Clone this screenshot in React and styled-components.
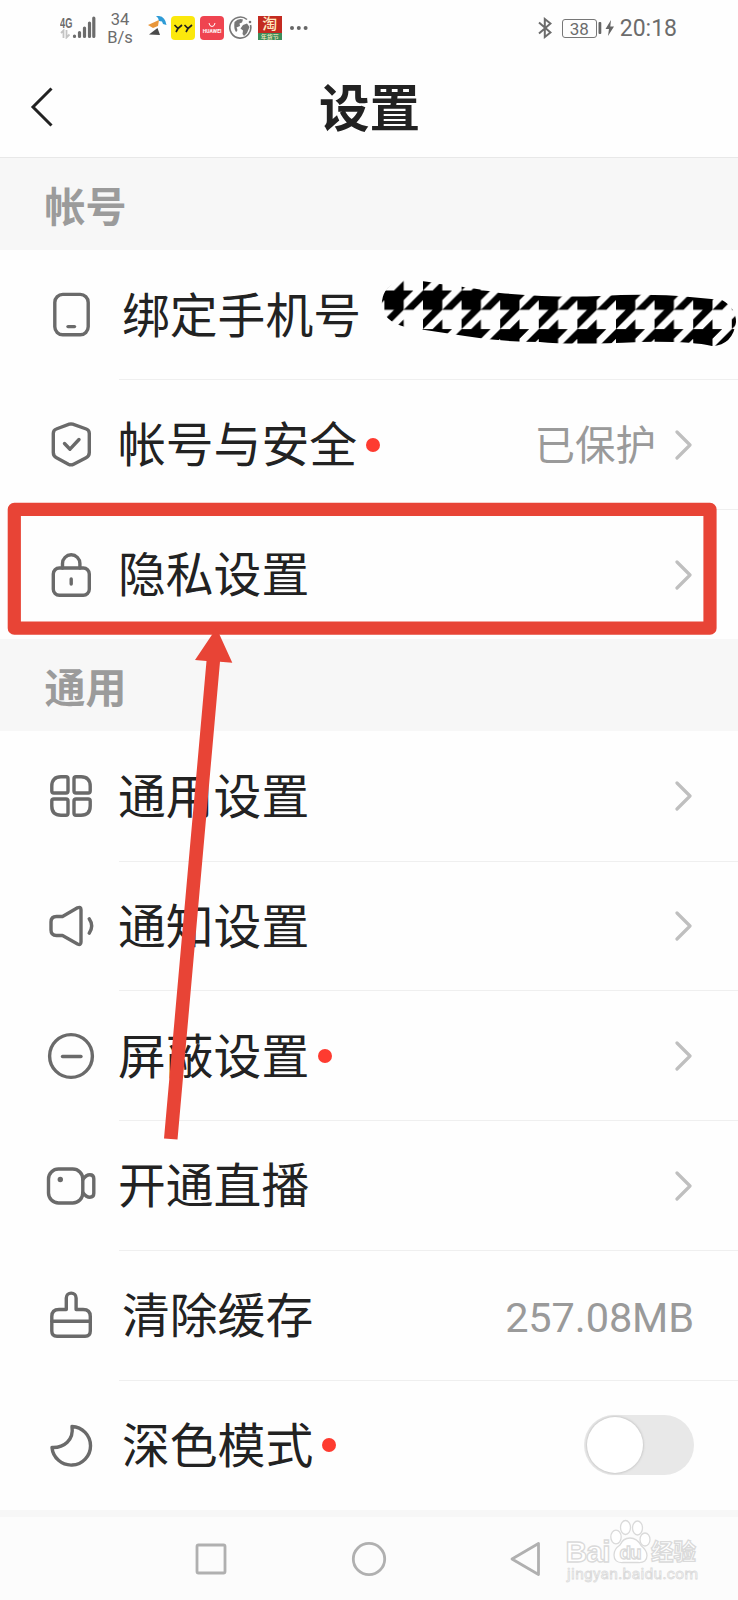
import React, { useState } from 'react';
import styled, { createGlobalStyle, css } from 'styled-components';

const GlobalStyle = createGlobalStyle`
  * {
    box-sizing: border-box;
  }

  body {
    margin: 0;
    background: #fefefe;
    color: #222;
    font-family: Roboto, 'Noto Sans CJK SC', sans-serif;
  }
`;

const Screen = styled.div`
  position: relative;
  display: flex;
  flex-direction: column;
  width: 738px;
  height: 1600px;
  overflow: hidden;
  background: #fefefe;
`;

const StatusBar = styled.div`
  display: flex;
  align-items: center;
  height: 56px;
  padding: 0 61px 0 60px;
  color: #6c6c6c;
`;

const Network = styled.div`
  display: flex;
  flex-direction: column;
  width: 12px;
  font-family: 'Liberation Sans', sans-serif;
  font-size: 14px;
  font-weight: 700;
  line-height: 11px;
`;

const NetworkLabel = styled.span`
  transform: scaleX(0.66);
  transform-origin: left;
`;

const Speed = styled.div`
  width: 28px;
  margin-left: 10px;
  padding-top: 1px;
  font-size: 16.5px;
  line-height: 18px;
  text-align: center;
`;

const AppIcons = styled.div`
  display: flex;
  align-items: center;
  gap: 4.8px;
  margin-left: 12.5px;
`;

const AppTile = styled.div`
  display: flex;
  align-items: center;
  justify-content: center;
  width: 24px;
  height: 24px;
  border-radius: 4px;
`;

const HuaweiTile = styled(AppTile)`
  flex-direction: column;
  background: #ef4450;
  color: #fff;
  font-size: 5px;
  font-weight: 700;
  line-height: 6px;
`;

const TaobaoTile = styled(AppTile)`
  flex-direction: column;
  justify-content: flex-start;
  border-radius: 0;
  background: #c32a20;
  color: #ffe9c0;
  font-size: 15px;
  font-weight: 500;
  line-height: 17px;
`;

const TaobaoBanner = styled.div`
  width: 24px;
  height: 7px;
  background: #3c8d5a;
  font-size: 6px;
  line-height: 7px;
  text-align: center;
`;

const StatusRight = styled.div`
  display: flex;
  align-items: center;
  margin-left: auto;
`;

const Battery = styled.div`
  width: 35px;
  height: 19px;
  margin-left: 10px;
  border: 1px solid #777;
  border-radius: 3px;
  font-size: 17px;
  line-height: 18px;
  text-align: center;
`;

const Time = styled.div`
  margin-left: 5px;
  padding-top: 1px;
  font-size: 23px;
  line-height: 28px;
`;

const Header = styled.header`
  display: grid;
  grid-template-columns: 100px 1fr 100px;
  align-items: center;
  height: 102px;
  border-bottom: 1px solid #e8e8e8;
`;

const BackButton = styled.button`
  display: flex;
  padding: 0 0 0 27px;
  border: none;
  background: none;
`;

const Title = styled.h1`
  margin: 0;
  padding: 6px 0 0 1px;
  font-size: 50.6px;
  font-weight: 700;
  line-height: 60px;
  text-align: center;
`;

const SectionTitle = styled.h2`
  display: flex;
  align-items: center;
  height: 92px;
  margin: 0;
  padding: 0 0 1px 44.5px;
  background: #f7f7f7;
  color: #9b9b9b;
  font-size: 41px;
  font-weight: 700;
`;

const Row = styled.div`
  position: relative;
  display: flex;
  align-items: center;
  height: 129.8px;
  padding: 0.4px 44px 0 44px;

  ${(props) =>
    props.$divider &&
    css`
      &::after {
        content: '';
        position: absolute;
        left: 119px;
        right: 0;
        bottom: -0.4px;
        height: 1px;
        background: #efefef;
      }
    `}
`;

const Label = styled.span`
  margin-left: ${(props) => (props.$indent ? 24 : 20)}px;
  padding-top: 3px;
  font-size: 47.8px;
  line-height: 60px;
  white-space: nowrap;
`;

const Dot = styled.span`
  width: 14px;
  height: 14px;
  margin-left: 9px;
  border-radius: 50%;
  background: #fe3b30;
`;

const Trailing = styled.div`
  display: flex;
  align-items: center;
  gap: 19px;
  margin-left: auto;
  color: #9a9a9a;
`;

const Value = styled.span`
  padding-bottom: 5px;
  font-size: 40.5px;
`;

const Size = styled.span`
  padding-top: 3px;
  font-size: 41.5px;
  letter-spacing: -0.1px;
`;

const Arrow = styled.svg`
  margin-right: 2px;
`;

const Toggle = styled.button`
  display: flex;
  justify-content: ${(props) => (props.$on ? 'flex-end' : 'flex-start')};
  align-items: center;
  width: 110px;
  height: 60px;
  padding: 0 3px;
  border: none;
  border-radius: 30px;
  background: #e8e8e8;
`;

const Knob = styled.span`
  width: 56px;
  height: 56px;
  border-radius: 50%;
  background: #fff;
  box-shadow: 0 0 2px 1px #ccc;
`;

const Scribble = styled.svg`
  position: absolute;
  left: 370px;
  top: 20px;
`;

const NavBar = styled.nav`
  position: relative;
  display: flex;
  align-items: center;
  gap: 122px;
  flex: 1;
  padding: 0 0 0 193px;
  border-top: 7px solid #f7f7f7;
  background: #fcfcfc;
`;

const Watermark = styled.svg`
  position: absolute;
  left: 558px;
  top: 0;
`;

const Annotation = styled.svg`
  position: absolute;
  left: 0;
  top: 0;
  pointer-events: none;
`;

const RowIcon = ({ children }) => (
  <svg
    width='54'
    height='54'
    viewBox='0 0 54 54'
    fill='none'
    stroke='#6a6a6a'
    strokeWidth='3.4'
    strokeLinecap='round'
    strokeLinejoin='round'
  >
    {children}
  </svg>
);

const icons = {
  phone: (
    <>
      <rect x='10.8' y='6.4' width='33.4' height='40.4' rx='8' />
      <path d='M24 38.6h6.5' />
    </>
  ),
  shield: (
    <>
      <path d='M25.3 6.2q1.7-.5 3.4 0L42.3 11q3 1 3 4.4V34.5q0 3.5-3.2 5.2L29.6 46.2q-2.6 1.3-5.2 0L12.5 39.7q-3.2-1.7-3.2-5.2V15.4q0-3.4 3-4.4Z' />
      <path d='M20.5 25.5l5.5 5.7 9-9.7' />
    </>
  ),
  lock: (
    <>
      <rect x='9.3' y='20' width='36' height='27.2' rx='6' />
      <path d='M18.5 20v-4.5a8.7 8.7 0 0 1 17.4 0V20M27.2 31v5' />
    </>
  ),
  grid: (
    <>
      <path d='M17 7.8h5q2 0 2 2V22q0 2-2 2H9.8q-2 0-2-2V17q0-9.2 9.2-9.2Z' />
      <path d='M37 7.8h-5q-2 0-2 2V22q0 2 2 2h12.200q2 0 2-2V17q0-9.200-9.200-9.200Z' />
      <path d='M17 46.2h5q2 0 2-2V32q0-2-2-2H9.8q-2 0-2 2v5q0 9.2 9.2 9.2Z' />
      <path d='M37 46.2h-5q-2 0-2-2V32q0-2 2-2h12.200q2 0 2 2v5q0 9.200-9.200 9.200Z' />
    </>
  ),
  speaker: (
    <>
      <path d='M18.5 17.5L33.5 8.8q3.500-1.500 3.500 2V43q0 3.500-3.500 2L18.500 36.500H12.500q-5.500 0-5.500-5.500V23q0-5.500 5.500-5.500Z' />
      <path d='M45.2 19.8q5 7.200 0 14.400' />
    </>
  ),
  block: (
    <>
      <circle cx='27' cy='27' r='21.4' />
      <path d='M18.5 27.5h18.5' />
    </>
  ),
  camera: (
    <>
      <rect x='4.5' y='10' width='34.3' height='34' rx='10' />
      <path d='M38.8 20.5q3.500-4.800 7-4.800 4 0 4 4v14.600q0 4-4 4-3.500 0-7-4.800' />
      <circle cx='16.3' cy='20.5' r='2.7' fill='#6a6a6a' stroke='none' />
    </>
  ),
  brush: (
    <>
      <path d='M22.3 20.5V9a4.9 4.9 0 0 1 9.8 0v11.5h7q7.200 0 7.200 7V42q0 5.200-5.200 5.200H13q-5.200 0-5.200-5.200V27.500q0-7 7.200-7Z' />
      <path d='M8 32.3h38' />
    </>
  ),
  moon: <path d='M28 8.5A19.3 19.3 0 1 1 8 29.5C20 30 30 22 28 8.5Z' />,
};

const Chevron = () => (
  <Arrow width='17' height='30' viewBox='0 0 17 30' fill='none'>
    <path
      d='M2 2l13 13L2 28'
      stroke='#bfbfbf'
      strokeWidth='3.2'
      strokeLinecap='round'
      strokeLinejoin='round'
    />
  </Arrow>
);

// Houndstooth brush stroke that hides the phone number
const PhoneScribble = () => (
  <Scribble width='368' height='90' viewBox='370 270 368 90'>
    <defs>
      <pattern
        id='tooth'
        x='538.8'
        y='290.5'
        width='38.6'
        height='38.6'
        patternUnits='userSpaceOnUse'
        viewBox='0 0 4 4'
      >
        <path d='M0 0h2v2h-2ZM2 0h1l-1 1ZM2 2h1l1-1v-1ZM0 3l1-1h1l-2 2ZM1 4l1-1v1Z' />
      </pattern>
    </defs>
    <path
      fill='url(#tooth)'
      d='M382 301Q384 285 402 280Q422 280 440 284Q468 287 500 293Q555 298 600 296Q650 293 690 297L722 300Q736 308 736 322Q733 345 712 346Q690 341 640 342Q570 345 540 342Q500 342 465 336L405 327Q380 320 382 301Z'
    />
  </Scribble>
);

const accountRows = [
  { icon: 'phone', label: '绑定手机号', indent: true, scribble: true },
  { icon: 'shield', label: '帐号与安全', dot: true, value: '已保护', arrow: true },
  { icon: 'lock', label: '隐私设置', arrow: true },
];

const generalRows = [
  { icon: 'grid', label: '通用设置', arrow: true },
  { icon: 'speaker', label: '通知设置', arrow: true },
  { icon: 'block', label: '屏蔽设置', dot: true, arrow: true },
  { icon: 'camera', label: '开通直播', arrow: true },
  { icon: 'brush', label: '清除缓存', indent: true, size: '257.08MB' },
  { icon: 'moon', label: '深色模式', indent: true, dot: true, toggle: true },
];

const SettingRow = ({ item, divider }) => {
  const [on, setOn] = useState(false);

  return (
    <Row $divider={divider}>
      <RowIcon>{icons[item.icon]}</RowIcon>
      <Label $indent={item.indent}>{item.label}</Label>
      {item.dot && <Dot />}
      {item.scribble && <PhoneScribble />}
      <Trailing>
        {item.value && <Value>{item.value}</Value>}
        {item.size && <Size>{item.size}</Size>}
        {item.arrow && <Chevron />}
        {item.toggle && (
          <Toggle $on={on} onClick={() => setOn(!on)}>
            <Knob />
          </Toggle>
        )}
      </Trailing>
    </Row>
  );
};

const Section = ({ title, rows }) => (
  <>
    <SectionTitle>{title}</SectionTitle>
    {rows.map((item, i) => (
      <SettingRow key={item.label} item={item} divider={i < rows.length - 1} />
    ))}
  </>
);

const Status = () => (
  <StatusBar>
    <Network>
      <NetworkLabel>4G</NetworkLabel>
      <svg width='12' height='10' viewBox='0 0 12 10' fill='none' stroke='#c4c4c4' strokeWidth='1.8'>
        <path d='M1 4l2.5-2.5V9M6.5 1v7.5L9.5 5.5' />
      </svg>
    </Network>
    <svg width='24' height='24' viewBox='0 0 24 24' stroke='#6c6c6c' strokeWidth='3.2' strokeLinecap='round'>
      <path d='M2.5 20v.5M7.5 16.5v4M12.5 12v8.5M17.5 7v13.5M21.8 2v18.5' />
    </svg>
    <Speed>
      34
      <br />
      B/s
    </Speed>
    <AppIcons>
      <svg width='20' height='24' viewBox='0 0 20 24'>
        <path d='M1 9L12 4l-1 6-5 2Z' fill='#e8963a' />
        <path d='M9 0q9-1 10.5 9l-3.5-1-1-2.5-3-.5-1-3Z' fill='#2e9bd6' />
        <path d='M2 18.5L10.5 12l2.5 7Z' fill='#4a4a4a' />
      </svg>
      <svg width='24' height='24' viewBox='0 0 24 24'>
        <rect width='24' height='24' rx='4' fill='#fbe80c' />
        <path
          d='M3.5 9l3.5 3.5L11 9M7 12.5l-2 3.5M13.5 9l3.5 3.5L21 9M17 12.5L15 16'
          fill='none'
          stroke='#222'
          strokeWidth='1.7'
        />
      </svg>
      <HuaweiTile>
        <svg width='8' height='5' viewBox='0 0 8 5' fill='none' stroke='#fff'>
          <path d='M1 0q.5 3.5 3 3.5T7 0' />
        </svg>
        HUAWEI
      </HuaweiTile>
      <svg width='24' height='24' viewBox='0 0 24 24'>
        <path d='M18 3.5A10.5 10.5 0 1 0 21.5 9' fill='none' stroke='#777' strokeWidth='1.6' />
        <circle cx='21' cy='6' r='1.3' fill='#777' />
        <path d='M5.5 6q4-4 8.5-2.500l-1 3-2.500 1 .5 2.500-3.500 1.500q2 3-.5 4.500Q4.500 13 5.500 6ZM14 9l4-1.500 2.500 3.500-2.500 6-3 3-1.500-2 .5-3.500-2.500-2Z' fill='#777' />
      </svg>
      <TaobaoTile>
        淘
        <TaobaoBanner>年货节</TaobaoBanner>
      </TaobaoTile>
      <svg width='22' height='6' viewBox='0 0 22 6' fill='#666'>
        <circle cx='6' cy='3' r='2' />
        <circle cx='12.8' cy='3' r='2' />
        <circle cx='19.6' cy='3' r='2' />
      </svg>
    </AppIcons>
    <StatusRight>
      <svg width='14' height='22' viewBox='0 0 14 22' fill='none' stroke='#6c6c6c' strokeWidth='2'>
        <path d='M1 5.5l11.5 10L6.8 20V2l5.7 4.5L1 16.5' />
      </svg>
      <Battery>38</Battery>
      <svg width='18' height='18' viewBox='0 0 18 18' fill='#666'>
        <rect x='1.5' y='3' width='2.8' height='12' rx='1' />
        <path d='M14 1L8.5 10h3.500L11 17l6-9.500h-3.700Z' />
      </svg>
      <Time>20:18</Time>
    </StatusRight>
  </StatusBar>
);

const SystemNav = () => (
  <NavBar>
    <svg width='36' height='36' viewBox='0 0 36 36' fill='none' stroke='#b0b0b0' strokeWidth='2.8'>
      <rect x='4' y='4' width='28' height='28' rx='1.5' />
    </svg>
    <svg width='36' height='36' viewBox='0 0 36 36' fill='none' stroke='#b0b0b0' strokeWidth='2.8'>
      <circle cx='18' cy='18' r='15.7' />
    </svg>
    <svg width='36' height='36' viewBox='0 0 36 36' fill='none' stroke='#b0b0b0' strokeWidth='2.8'>
      <path d='M29.5 2.5v31L3 18Z' strokeLinejoin='round' />
    </svg>
    <Watermark width='150' height='76' viewBox='558 1517 150 76' fill='#fff' stroke='#dadada' strokeWidth='1.3'>
      <text x='565.5' y='1562' fontFamily='Liberation Sans' fontSize='30' fontWeight='700' textLength='45'>
        Bai
      </text>
      <ellipse cx='616' cy='1537' rx='5.2' ry='6.8' />
      <ellipse cx='625.5' cy='1527.5' rx='5' ry='7' />
      <ellipse cx='637.5' cy='1528' rx='5' ry='7' />
      <ellipse cx='645' cy='1539.5' rx='5' ry='6.5' />
      <path d='M630 1538q-7 0-10 7-6 4-6 10 0 8 9 7.5h15q9 .5 9-7 0-5-6-10-4-7.5-11-7.5Z' />
      <text x='619.5' y='1559' fontFamily='Liberation Sans' fontSize='19' fontWeight='700' textLength='22'>
        du
      </text>
      <text x='651' y='1560' fontFamily='Noto Sans CJK SC' fontSize='22.5' fontWeight='700'>
        经验
      </text>
      <text x='567' y='1579' fontFamily='Roboto' fontSize='15.5' strokeWidth='.8' textLength='131'>
        jingyan.baidu.com
      </text>
    </Watermark>
  </NavBar>
);

const App = () => (
  <>
    <GlobalStyle />
    <Screen>
      <Status />
      <Header>
        <BackButton>
          <svg width='26' height='42' viewBox='0 0 26 42' fill='none'>
            <path d='M24.5 2.5L6 21l18.5 18.5' stroke='#222' strokeWidth='3' />
          </svg>
        </BackButton>
        <Title>设置</Title>
      </Header>
      <Section title='帐号' rows={accountRows} />
      <Section title='通用' rows={generalRows} />
      <SystemNav />
      <Annotation width='738' height='1600' fill='none'>
        <path
          d='M14.3 509.3H710V628.2H14.3Z'
          stroke='#e84436'
          strokeWidth='13.2'
          strokeLinejoin='round'
        />
        <path
          d='M216.5 628L232.3 662.8 220 661.8 177.5 1139.5 164 1138.5 206.5 661 195 660Z'
          fill='#e84436'
        />
      </Annotation>
    </Screen>
  </>
);

export default App;
